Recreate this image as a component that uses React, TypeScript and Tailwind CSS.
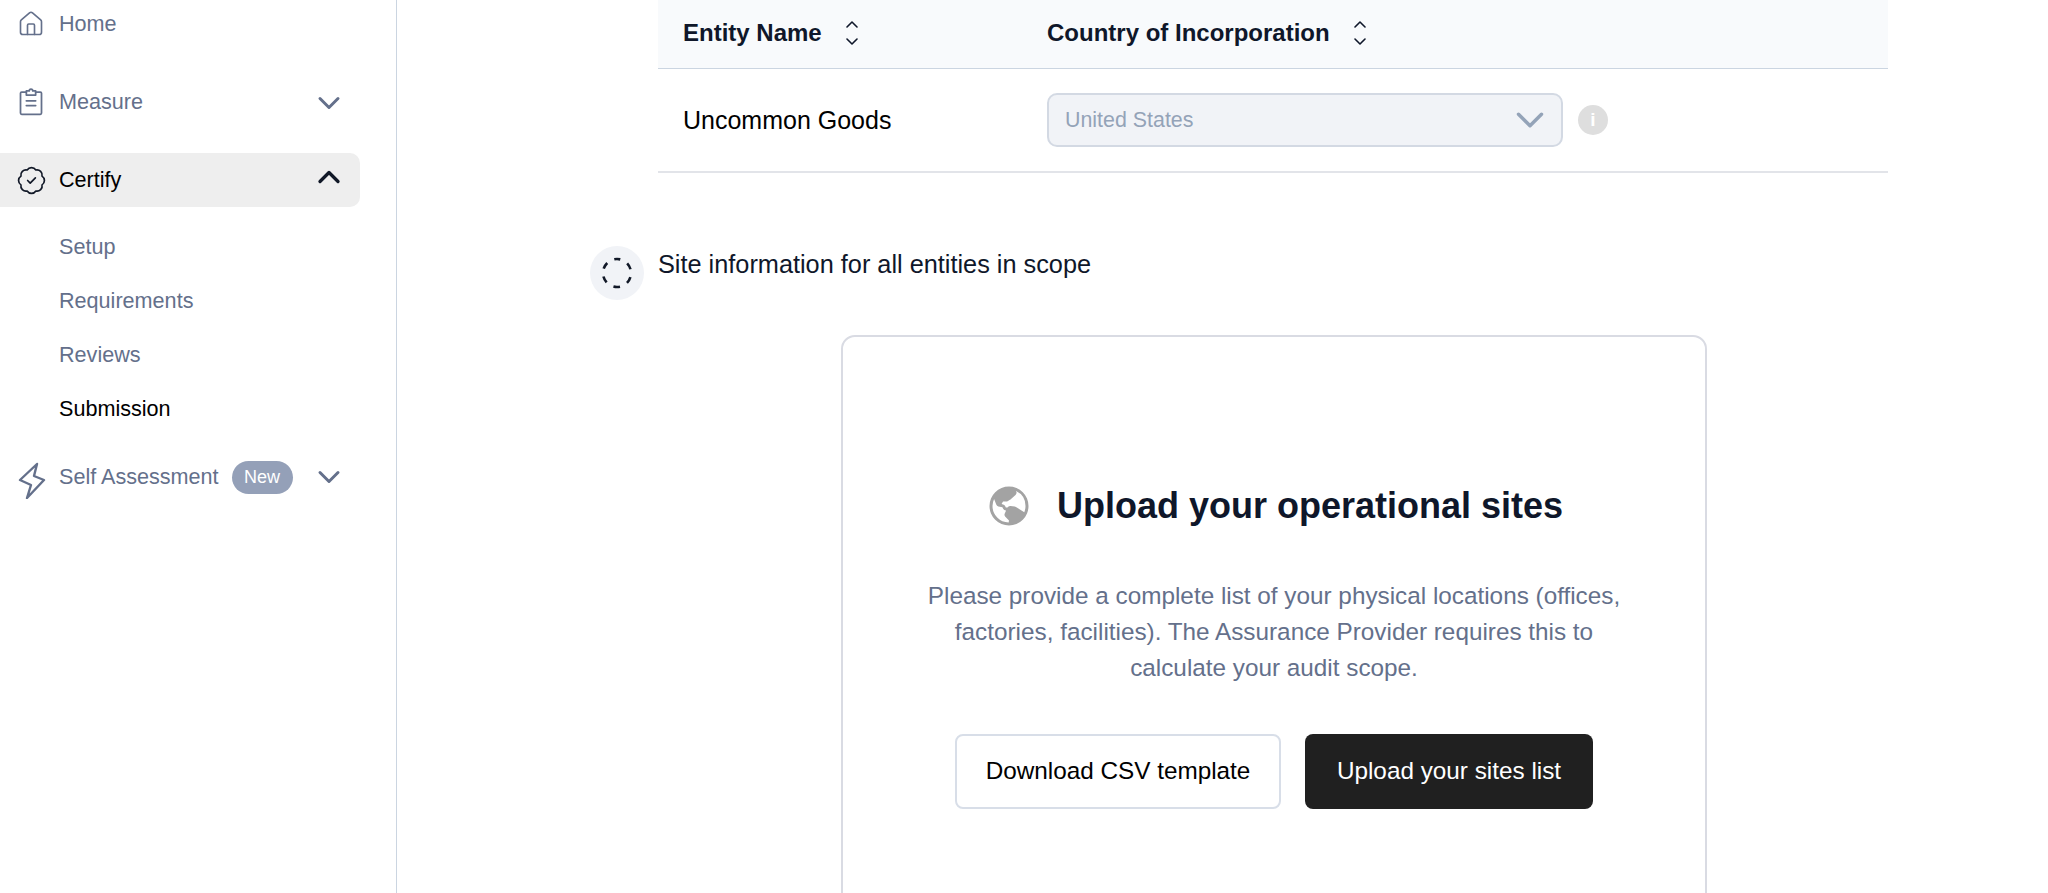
import React from 'react';
import { BadgeCheck, ChevronDown, ChevronUp, House } from 'lucide-react';
import { PiGlobeHemisphereWestFill } from 'react-icons/pi';

const ClipboardIcon = ({ className }: { className?: string }) => (
  <svg viewBox="0 0 24 24" fill="none" stroke="currentColor" strokeWidth="1.5" strokeLinejoin="round" strokeLinecap="round" className={className}>
    <path d="M8 3.5H4a1 1 0 0 0-1 1v17a1 1 0 0 0 1 1h16a1 1 0 0 0 1-1v-17a1 1 0 0 0-1-1h-4" />
    <path d="M8 6V2.5h2.5a1.5 1.5 0 0 1 3 0H16V6z" />
    <path d="M8 11h8M8 15h8" />
  </svg>
);

const BoltIcon = ({ className }: { className?: string }) => (
  <svg viewBox="0 0 28 37" fill="none" stroke="currentColor" strokeWidth="2.4" strokeLinejoin="round" strokeLinecap="round" className={className}>
    <path d="M19 2 2 18l11 5-4 13 17-18-10-4z" />
  </svg>
);

const SortIcon = () => (
  <svg viewBox="0 0 12 24" fill="none" stroke="#0f172a" strokeWidth="1.6" strokeLinecap="round" strokeLinejoin="round" className="w-[12px] h-[24px]">
    <path d="M1 6 6 1l5 5M1 18l5 5 5-5" />
  </svg>
);

const DashedCircle = () => (
  <svg viewBox="0 0 32 32" fill="none" stroke="#111827" strokeWidth="2.6" strokeLinecap="butt" className="w-[32px] h-[32px]">
    <circle cx="16" cy="16" r="14" strokeDasharray="6.7 7.96" strokeDashoffset="3.35" transform="rotate(-90 16 16)" />
  </svg>
);

const SubItem = ({ label, active }: { label: string; active?: boolean }) => (
  <div className={`h-[54px] pl-[59px] flex items-center text-[21.6px] ${active ? 'text-black' : 'text-[#64708b]'}`}>{label}</div>
);

const App = () => {
  return (
    <div className="h-[893px] w-[2048px] overflow-hidden flex bg-white font-['Liberation_Sans',sans-serif]">
      <aside className="w-[397px] shrink-0 border-r border-[#cbd5e1] pr-[36px]">
        <div className="h-[48px] pl-[17px] flex items-center text-[21.6px] text-[#64708b]">
          <House className="w-[28px] h-[28px] mr-[14px]" strokeWidth={1.4} />
          <span>Home</span>
        </div>
        <div className="h-[54px] mt-[27px] pl-[17px] pr-[13px] flex items-center text-[21.6px] text-[#64708b]">
          <ClipboardIcon className="w-[28px] h-[28px] mr-[14px]" />
          <span className="flex-1 pt-[1px]">Measure</span>
          <ChevronDown className="w-[36px] h-[36px] mt-[2px]" strokeWidth={2} />
        </div>
        <div className="h-[54px] mt-[24px] pl-[16px] pr-[13px] flex items-center text-[21.6px] text-black bg-[#eeeeee] rounded-r-[10px]">
          <BadgeCheck className="w-[31px] h-[31px] mr-[12px] text-[#111827]" strokeWidth={1.3} />
          <span className="flex-1 pt-[1px]">Certify</span>
          <ChevronUp className="w-[36px] h-[36px] text-[#111827] -mt-[6px]" strokeWidth={2.2} />
        </div>
        <div className="mt-[13px]">
          <SubItem label="Setup" />
          <SubItem label="Requirements" />
          <SubItem label="Reviews" />
          <SubItem label="Submission" active />
        </div>
        <div className="h-[54px] mt-[14px] pl-[18px] pr-[13px] flex items-center text-[21.6px] text-[#64708b]">
          <BoltIcon className="w-[28px] h-[37px] mt-[6px] mr-[13px]" />
          <span>Self Assessment</span>
          <span className="ml-[13px] h-[33px] w-[61px] rounded-full bg-[#94a0b8] text-white text-[18px] flex items-center justify-center">New</span>
          <ChevronDown className="w-[36px] h-[36px] ml-auto" strokeWidth={2} />
        </div>
      </aside>
      <main className="flex-1 pl-[261px]">
        <div className="w-[1230px]">
          <div className="h-[69px] bg-[#f8fafc] border-b border-[#cbd5e1] flex items-center pl-[25px] pb-[2px] text-[24px] font-bold text-[#0f172a]">
            <div className="w-[364px] flex items-center gap-[24px]">
              <span>Entity Name</span>
              <SortIcon />
            </div>
            <div className="flex items-center gap-[24px]">
              <span>Country of Incorporation</span>
              <SortIcon />
            </div>
          </div>
          <div className="h-[104px] border-b-2 border-[#e2e4e9] flex items-center pl-[25px]">
            <div className="w-[364px] pt-[1px] text-[25px] text-black">Uncommon Goods</div>
            <div className="w-[516px] h-[54px] rounded-[10px] border-2 border-[#d3d9e3] bg-[#f1f3f7] flex items-center justify-between pl-[16px] pr-[8px] text-[21.4px] text-[#94a3b8]">
              <span className="pt-[1px]">United States</span>
              <ChevronDown className="w-[46px] h-[46px]" strokeWidth={1.8} />
            </div>
            <div className="ml-[15px] w-[30px] h-[30px] rounded-full bg-[#dedede] text-white text-[19px] font-bold flex items-center justify-center">i</div>
          </div>
        </div>
        <div className="mt-[73px] -ml-[68px] flex">
          <div className="w-[54px] h-[54px] rounded-full bg-[#f1f3f7] flex items-center justify-center">
            <DashedCircle />
          </div>
          <div className="ml-[14px] text-[25.3px] text-[#0f172a] leading-[36px]">Site information for all entities in scope</div>
        </div>
        <div className="mt-[35px] ml-[183px] w-[866px] h-[600px] border-2 border-[#d9dbe3] rounded-t-[14px] flex flex-col items-center pt-[134px]">
          <div className="flex items-center gap-[24px] h-[70px]">
            <PiGlobeHemisphereWestFill className="w-[48px] h-[48px] text-[#a3a3a3]" />
            <h1 className="text-[36px] font-bold text-[#0f172a]">Upload your operational sites</h1>
          </div>
          <p className="mt-[37px] w-[730px] text-center text-[24.3px] leading-[36px] text-[#64708b]">
            Please provide a complete list of your physical locations (offices, factories, facilities). The Assurance Provider requires this to calculate your audit scope.
          </p>
          <div className="mt-[48px] flex gap-[24px]">
            <button className="h-[75px] w-[326px] rounded-[8px] border-2 border-[#d8dee8] bg-white text-[24.3px] text-black">Download CSV template</button>
            <button className="h-[75px] w-[288px] rounded-[8px] bg-[#202020] text-[24.3px] text-white">Upload your sites list</button>
          </div>
        </div>
      </main>
    </div>
  );
};

export default App;
